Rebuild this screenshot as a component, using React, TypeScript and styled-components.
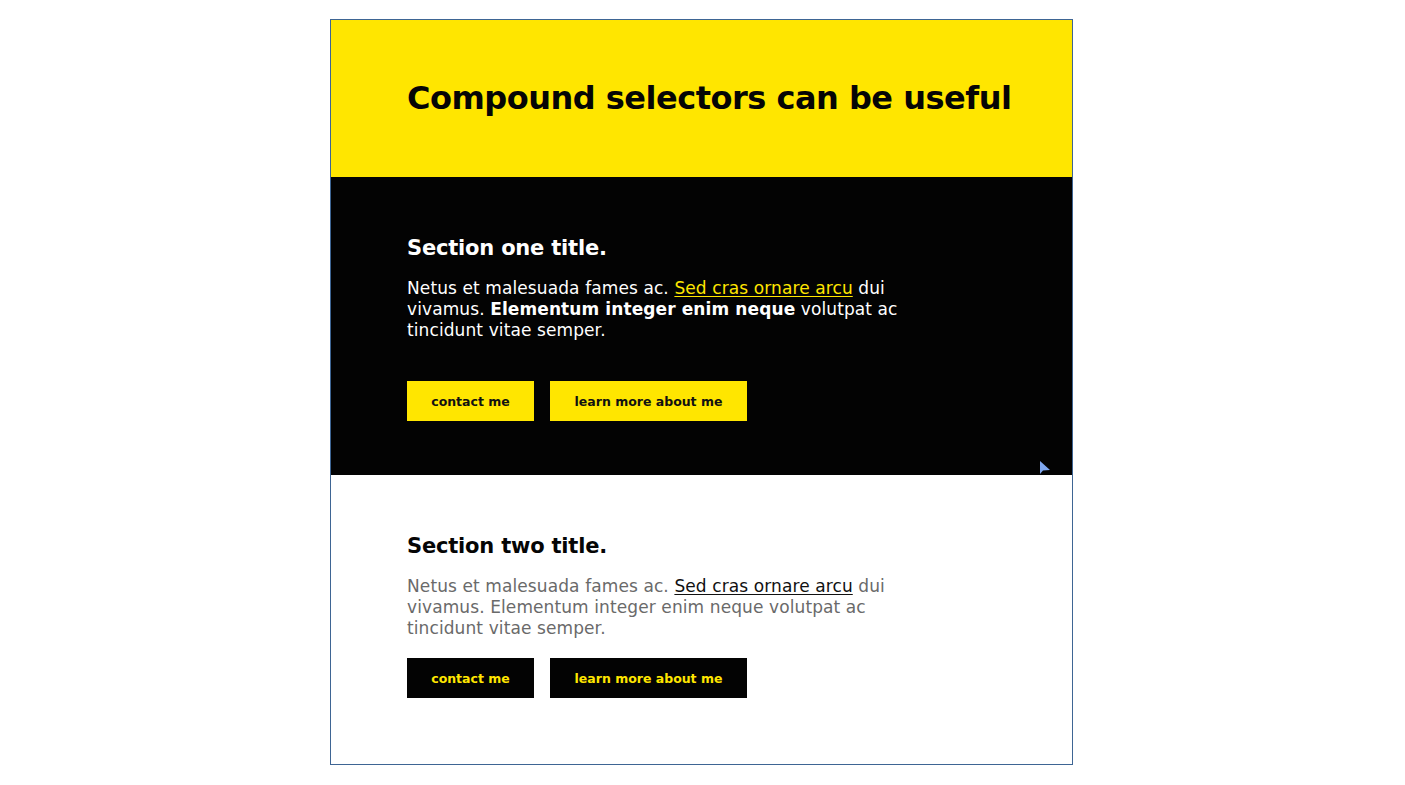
import React from "react";
import styled, { createGlobalStyle } from "styled-components";

const Global = createGlobalStyle`
  html, body { margin: 0; padding: 0; background: #ffffff; }
  body { font-family: "DejaVu Sans", "Liberation Sans", sans-serif; }
  * { box-sizing: border-box; }
`;

const Stage = styled.div`
  width: 1405px;
  height: 785px;
  padding: 19px 0 0 330px;
  position: relative;
`;

const Frame = styled.div`
  width: 743px;
  height: 746px;
  border: 1px solid #3e6594;
  display: flex;
  flex-direction: column;
  background: #fff;
`;

const Hero = styled.header`
  flex: 0 0 157px;
  background: #ffe600;
  display: flex;
  align-items: center;
  padding-left: 76px;
`;

const HeroTitle = styled.h1`
  margin: -2px 0 0;
  font-size: 32px;
  font-weight: 700;
  color: #050505;
  letter-spacing: -0.5px;
`;

const Section = styled.section<{ $dark?: boolean }>`
  background: ${(p) => (p.$dark ? "#030303" : "#ffffff")};
  color: ${(p) => (p.$dark ? "#ffffff" : "#6a6a6a")};
  padding: 59px 0 0 76px;
  flex: ${(p) => (p.$dark ? "0 0 298px" : "1")};
`;

const SectionTitle = styled.h2<{ $dark?: boolean }>`
  margin: 0 0 18px;
  font-size: 21px;
  font-weight: 700;
  letter-spacing: -0.2px;
  color: ${(p) => (p.$dark ? "#ffffff" : "#050505")};
`;

const Para = styled.p<{ $gap: number }>`
  margin: 0 0 ${(p) => p.$gap}px;
  width: 500px;
  font-size: 17px;
  line-height: 21px;
  letter-spacing: 0.1px;
`;

const Link = styled.a<{ $dark?: boolean }>`
  color: ${(p) => (p.$dark ? "#ffe600" : "#111")};
  text-decoration: underline;
  text-underline-offset: 2px;
`;

const Strong = styled.strong`
  font-weight: 700;
`;

const Buttons = styled.div`
  display: flex;
  gap: 16px;
`;

const Button = styled.button<{ $dark?: boolean; $w: number }>`
  width: ${(p) => p.$w}px;
  height: 40px;
  border: none;
  background: ${(p) => (p.$dark ? "#ffe600" : "#030303")};
  color: ${(p) => (p.$dark ? "#111" : "#ffe600")};
  font-family: "DejaVu Sans", sans-serif;
  font-weight: 700;
  font-size: 12.5px;
  padding: 0;
`;

const Cursor = styled.svg`
  position: absolute;
  left: 1039px;
  top: 461px;
`;

export default function App() {
  return (
    <Stage>
      <Global />
      <Frame>
        <Hero>
          <HeroTitle>Compound selectors can be useful</HeroTitle>
        </Hero>
        <Section $dark>
          <SectionTitle $dark>Section one title.</SectionTitle>
          <Para $gap={40}>
            Netus et malesuada fames ac. <Link $dark href="#">Sed cras ornare arcu</Link> dui
            vivamus. <Strong>Elementum integer enim neque</Strong> volutpat ac tincidunt vitae semper.
          </Para>
          <Buttons>
            <Button $dark $w={127}>contact me</Button>
            <Button $dark $w={197}>learn more about me</Button>
          </Buttons>
        </Section>
        <Section>
          <SectionTitle>Section two title.</SectionTitle>
          <Para $gap={19}>
            Netus et malesuada fames ac. <Link href="#">Sed cras ornare arcu</Link> dui
            vivamus. Elementum integer enim neque volutpat ac tincidunt vitae semper.
          </Para>
          <Buttons>
            <Button $w={127}>contact me</Button>
            <Button $w={197}>learn more about me</Button>
          </Buttons>
        </Section>
      </Frame>
      <Cursor width="12" height="14" viewBox="0 0 12 14">
        <path d="M1 0 L1 13 L4 9.5 L11 9 Z" fill="#7fa7ee" />
      </Cursor>
    </Stage>
  );
}
